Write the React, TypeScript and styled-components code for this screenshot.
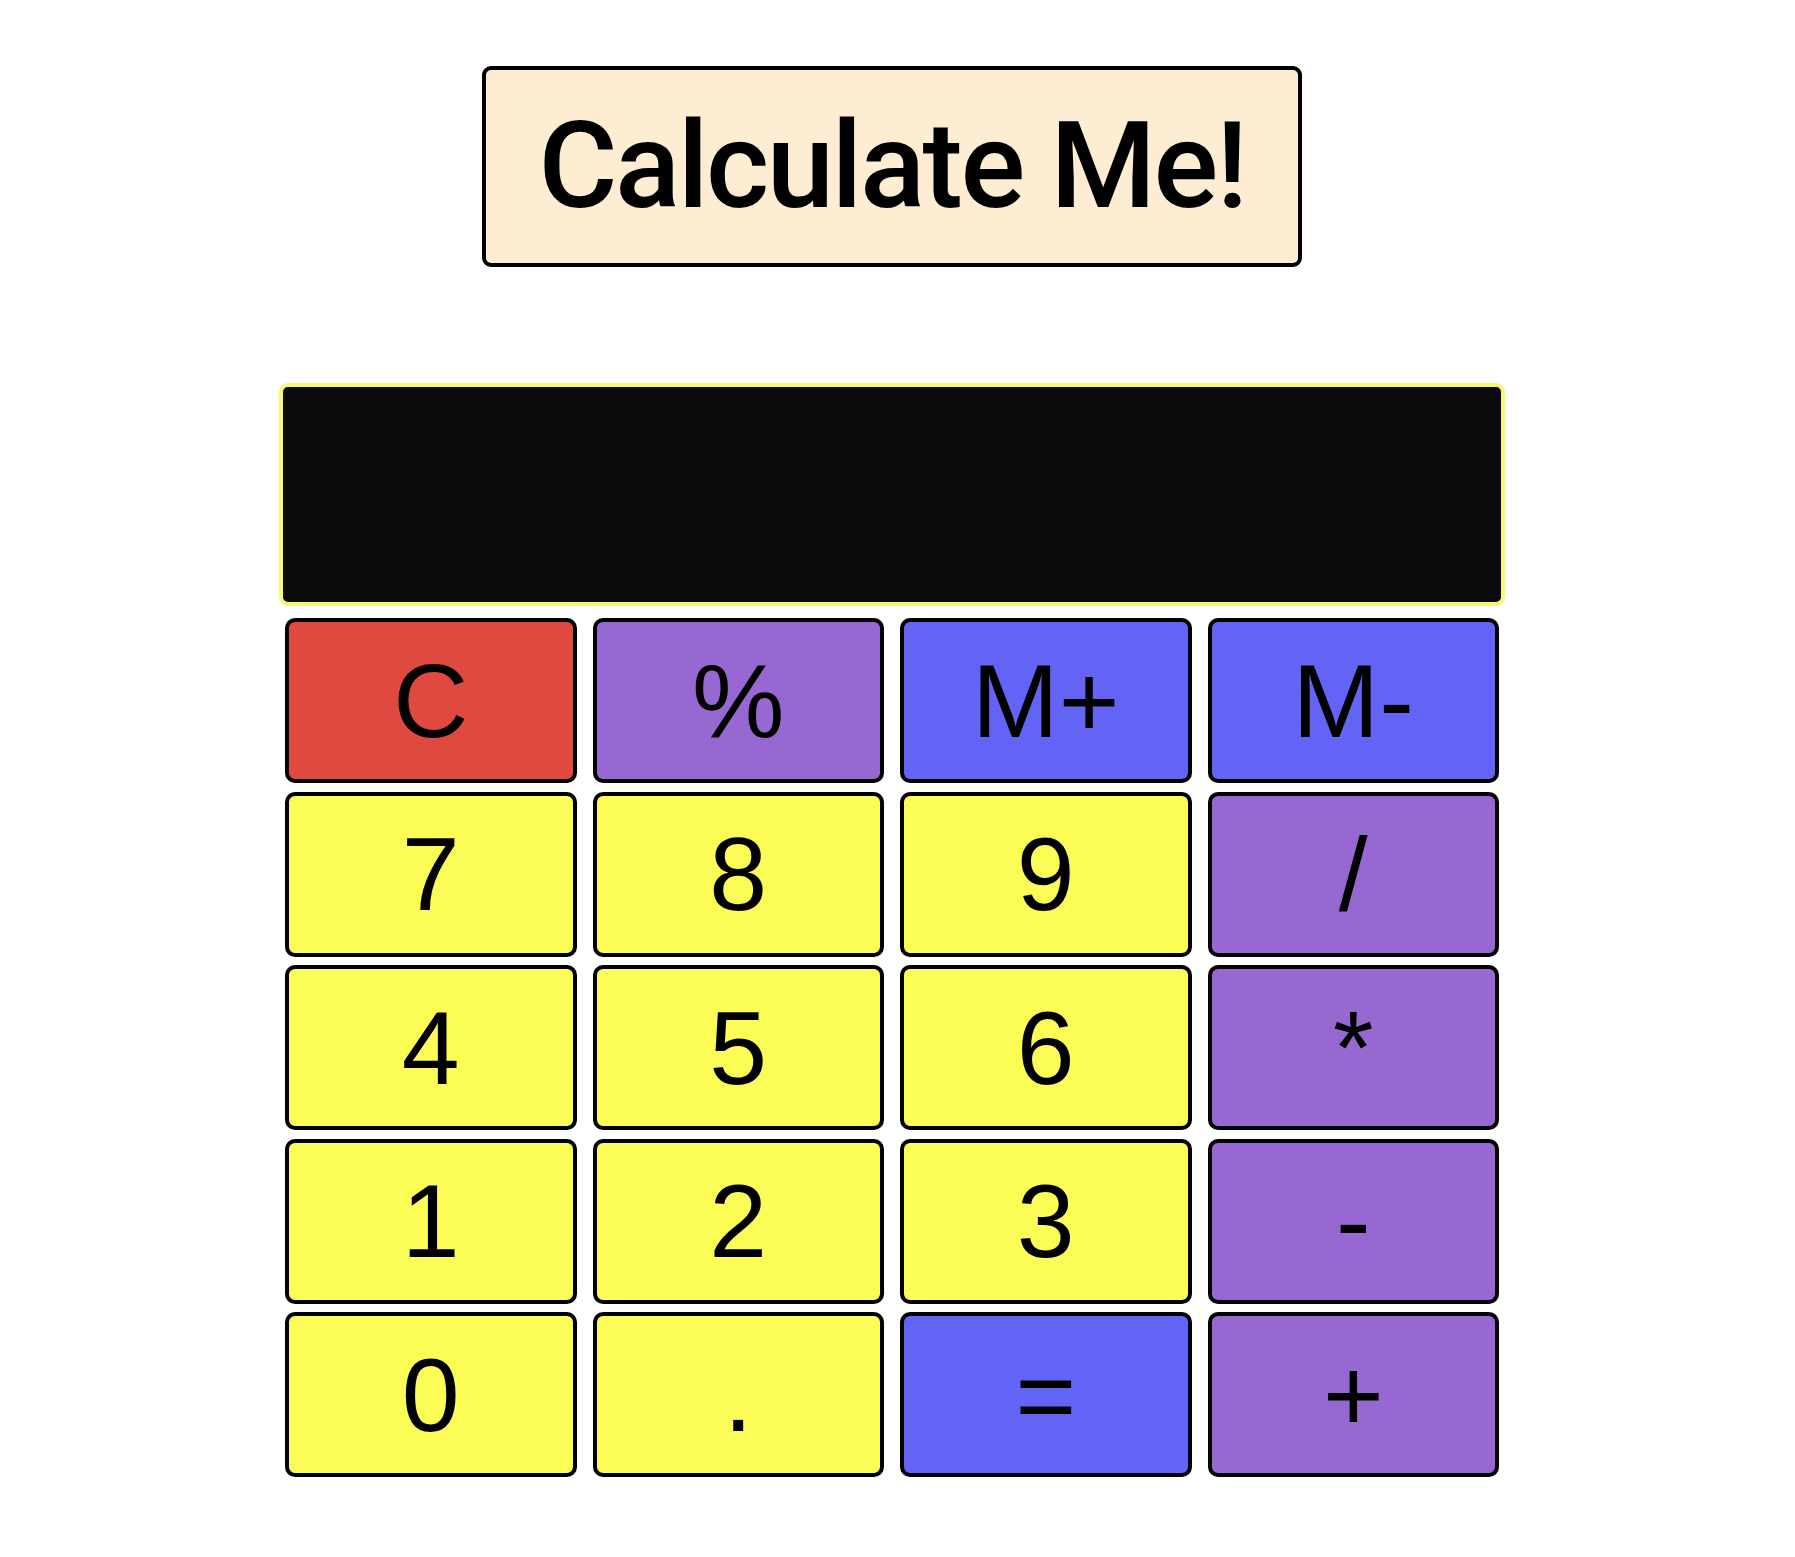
import React from 'react';
import styled, { createGlobalStyle } from 'styled-components';

const GlobalStyle = createGlobalStyle`
  html, body {
    margin: 0;
    padding: 0;
    background: #ffffff;
  }
  body {
    font-family: "Liberation Sans", Arial, sans-serif;
  }
`;

const palette = {
  cream: '#fcedd3',
  screen: '#0b0b0b',
  screenBorder: '#f8f874',
  red: '#e0493f',
  purple: '#9868d2',
  blue: '#6363f6',
  yellow: '#fcfc56',
  ink: '#000000',
};

type KeyTone = 'red' | 'purple' | 'blue' | 'yellow';

const PageContainer = styled.div`
  display: flex;
  flex-direction: column;
  align-items: center;
  width: 1784px;
  padding-top: 66px;
  padding-bottom: 80px;
`;

const TitleBox = styled.h1`
  display: flex;
  align-items: center;
  justify-content: center;
  box-sizing: border-box;
  width: 820px;
  height: 201px;
  margin: 0;
  background-color: ${palette.cream};
  border: 4px solid ${palette.ink};
  border-radius: 9px;
  font-family: Roboto, "Liberation Sans", sans-serif;
  font-weight: 500;
  font-size: 121px;
  line-height: 1;
  letter-spacing: -2.5px;
  color: ${palette.ink};
`;

const Screen = styled.div`
  box-sizing: border-box;
  width: 1226px;
  height: 223px;
  margin-top: 116px;
  background-color: ${palette.screen};
  border: 4px solid ${palette.screenBorder};
  border-radius: 9px;
`;

const Keypad = styled.div`
  display: grid;
  grid-template-columns: repeat(4, 1fr);
  grid-auto-rows: 165px;
  column-gap: 16px;
  row-gap: 8.5px;
  width: 1214px;
  margin-top: 12px;
`;

const toneColor = (tone: KeyTone) => palette[tone];

const Key = styled.button<{ $tone: KeyTone }>`
  display: flex;
  align-items: center;
  justify-content: center;
  box-sizing: border-box;
  padding: 0;
  margin: 0;
  background-color: ${(p) => toneColor(p.$tone)};
  border: 4px solid ${palette.ink};
  border-radius: 10px;
  font-family: "Liberation Sans", Arial, sans-serif;
  font-size: 104px;
  font-weight: 400;
  line-height: 1;
  color: ${palette.ink};
  cursor: pointer;
`;

const keys: { label: string; tone: KeyTone }[] = [
  { label: 'C', tone: 'red' },
  { label: '%', tone: 'purple' },
  { label: 'M+', tone: 'blue' },
  { label: 'M-', tone: 'blue' },
  { label: '7', tone: 'yellow' },
  { label: '8', tone: 'yellow' },
  { label: '9', tone: 'yellow' },
  { label: '/', tone: 'purple' },
  { label: '4', tone: 'yellow' },
  { label: '5', tone: 'yellow' },
  { label: '6', tone: 'yellow' },
  { label: '*', tone: 'purple' },
  { label: '1', tone: 'yellow' },
  { label: '2', tone: 'yellow' },
  { label: '3', tone: 'yellow' },
  { label: '-', tone: 'purple' },
  { label: '0', tone: 'yellow' },
  { label: '.', tone: 'yellow' },
  { label: '=', tone: 'blue' },
  { label: '+', tone: 'purple' },
];

const App = () => {
  return (
    <>
      <GlobalStyle />
      <PageContainer>
        <TitleBox>Calculate Me!</TitleBox>
        <Screen />
        <Keypad>
          {keys.map((k) => (
            <Key key={k.label} $tone={k.tone}>
              {k.label}
            </Key>
          ))}
        </Keypad>
      </PageContainer>
    </>
  );
};

export default App;
